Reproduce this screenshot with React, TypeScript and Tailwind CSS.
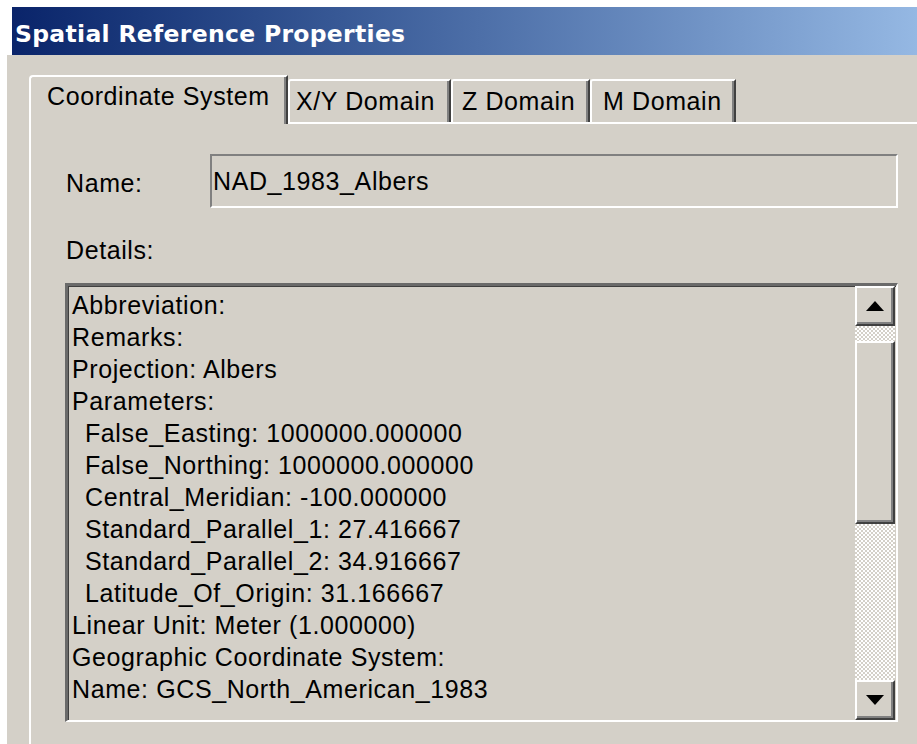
import React from 'react'

const DETAILS: { text: string; indent?: boolean }[] = [
  { text: 'Abbreviation:' },
  { text: 'Remarks:' },
  { text: 'Projection: Albers' },
  { text: 'Parameters:' },
  { text: 'False_Easting: 1000000.000000', indent: true },
  { text: 'False_Northing: 1000000.000000', indent: true },
  { text: 'Central_Meridian: -100.000000', indent: true },
  { text: 'Standard_Parallel_1: 27.416667', indent: true },
  { text: 'Standard_Parallel_2: 34.916667', indent: true },
  { text: 'Latitude_Of_Origin: 31.166667', indent: true },
  { text: 'Linear Unit: Meter (1.000000)' },
  { text: 'Geographic Coordinate System:' },
  { text: 'Name: GCS_North_American_1983' },
]

// classic raised 3D edge used by the scroll buttons and thumb
const RAISED =
  'border-t-2 border-l-2 border-r-2 border-b-2 border-t-white border-l-white border-r-[#404040] border-b-[#404040] shadow-[inset_-2px_-2px_0_#808080] bg-[#d4d0c8]'

const TRACK =
  'bg-[image:repeating-conic-gradient(#ffffff_0_25%,#d4d0c8_0_50%)] bg-[length:4px_4px]'

function Tab({ label, width, pl, selected }: { label: string; width: string; pl: string; selected?: boolean }) {
  if (selected) {
    return (
      <div
        className={`relative z-10 -mb-[2px] h-[49px] ${width} ${pl} shrink-0 rounded-tl-[4px] border-t-2 border-l-2 border-r-2 border-t-white border-l-white border-r-[#404040] bg-[#d4d0c8] pt-[3px] shadow-[inset_-2px_0_0_#808080]`}
      >
        {label}
      </div>
    )
  }
  return (
    <div
      className={`h-[43px] ${width} ${pl} shrink-0 rounded-tl-[3px] border-t-2 border-l-2 border-r-2 border-t-white border-l-white border-r-[#404040] bg-[#d4d0c8] pt-[4px] shadow-[inset_-2px_0_0_#808080]`}
    >
      {label}
    </div>
  )
}

function ScrollButton({ up }: { up?: boolean }) {
  return (
    <div className={`flex h-[40px] items-center justify-center ${RAISED}`}>
      {up ? (
        <div className="h-0 w-0 border-r-[9px] border-b-[10px] border-l-[9px] border-r-transparent border-b-black border-l-transparent" />
      ) : (
        <div className="h-0 w-0 border-t-[10px] border-r-[9px] border-l-[9px] border-t-black border-r-transparent border-l-transparent" />
      )}
    </div>
  )
}

export default function App() {
  return (
    <div className="h-[744px] w-[917px] overflow-hidden bg-white font-['Liberation_Sans',Arial,sans-serif] text-[25px] leading-[32px] tracking-[0.6px] text-black">
      <div className="h-[7px]" />

      {/* title bar */}
      <div className="ml-[12px] h-[48px] bg-linear-to-r from-[#0a246a] to-[#95b8e3] pt-[10px] pl-[3px]">
        <span className="font-['DejaVu_Sans',Verdana,sans-serif] text-[23.5px] leading-[28px] font-bold tracking-[0.3px] text-white">
          Spatial Reference Properties
        </span>
      </div>

      <div className="ml-[7px] h-[689px] bg-[#d4d0c8] pt-[20px] pl-[22px]">
        {/* tab strip */}
        <div className="flex h-[47px] items-end">
          <Tab label="Coordinate System" width="w-[259px]" pl="pl-[16px]" selected />
          <Tab label="X/Y Domain" width="w-[163px]" pl="pl-[6px]" />
          <Tab label="Z Domain" width="w-[139px]" pl="pl-[9px]" />
          <Tab label="M Domain" width="w-[146px]" pl="pl-[11px]" />
        </div>

        {/* tab page */}
        <div className="h-[623px] border-t-2 border-l-2 border-white pt-[30px] pl-[35px]">
          <div className="flex items-start">
            <div className="w-[144px] pt-[13px]">Name:</div>
            <div className="h-[54px] w-[688px] border-t-2 border-l-2 border-r-2 border-b-2 border-t-[#808080] border-l-[#808080] border-r-white border-b-white pt-[9px] pl-[1px]">
              NAD_1983_Albers
            </div>
          </div>

          <div className="mt-[26px]">Details:</div>

          <div className="mt-[17px] -ml-[1px] flex h-[439px] w-[833px] border-t-[3px] border-l-[3px] border-r-2 border-b-2 border-t-[#6a6a6a] border-l-[#6a6a6a] border-r-white border-b-white shadow-[inset_1px_1px_0_#404040]">
            <div className="flex-1 pt-[3px] pl-[4px]">
              {DETAILS.map((line) => (
                <div key={line.text} className={`whitespace-nowrap ${line.indent ? 'pl-[13px]' : ''}`}>
                  {line.text}
                </div>
              ))}
            </div>

            <div className="mr-[1px] flex w-[40px] flex-col">
              <ScrollButton up />
              <div className={`h-[15px] ${TRACK}`} />
              <div className={`h-[183px] ${RAISED}`} />
              <div className={`flex-1 ${TRACK}`} />
              <ScrollButton />
            </div>
          </div>
        </div>
      </div>
    </div>
  )
}
